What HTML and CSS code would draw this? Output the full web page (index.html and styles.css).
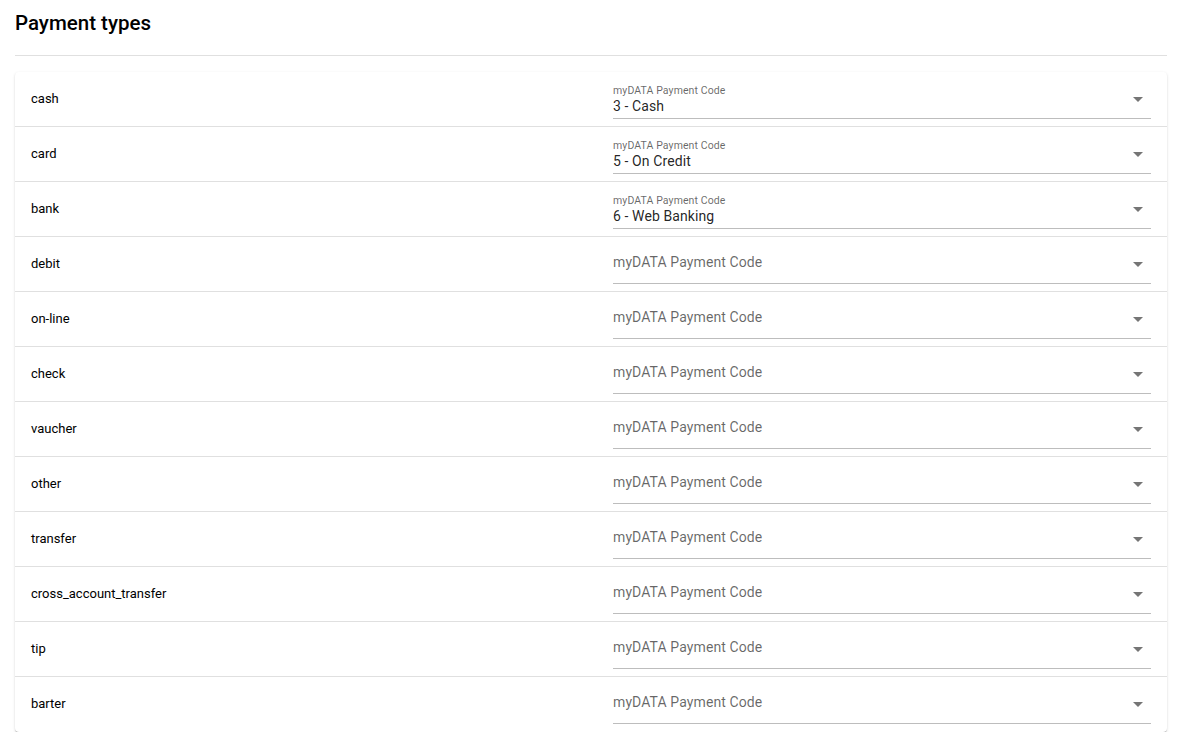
FILE: index.html
```html
<!DOCTYPE html>
<html lang="en">
<head>
    <meta charset="UTF-8">
    <meta name="viewport" content="width=device-width, initial-scale=1.0">
    <title>Payment types</title>
    <link rel="stylesheet" href="styles.css">
</head>
<body>
    <h1>Payment types</h1>
    <hr class="divider">

    <div class="card">
        <div class="row">
            <div class="name">cash</div>
            <div class="field filled">
                <div class="field-text">
                    <span class="field-label">myDATA Payment Code</span>
                    <span class="field-value">3 - Cash</span>
                </div>
                <span class="arrow"></span>
            </div>
        </div>
        <div class="row">
            <div class="name">card</div>
            <div class="field filled">
                <div class="field-text">
                    <span class="field-label">myDATA Payment Code</span>
                    <span class="field-value">5 - On Credit</span>
                </div>
                <span class="arrow"></span>
            </div>
        </div>
        <div class="row">
            <div class="name">bank</div>
            <div class="field filled">
                <div class="field-text">
                    <span class="field-label">myDATA Payment Code</span>
                    <span class="field-value">6 - Web Banking</span>
                </div>
                <span class="arrow"></span>
            </div>
        </div>
        <div class="row">
            <div class="name">debit</div>
            <div class="field">
                <div class="field-text"><span class="placeholder">myDATA Payment Code</span></div>
                <span class="arrow"></span>
            </div>
        </div>
        <div class="row">
            <div class="name">on-line</div>
            <div class="field">
                <div class="field-text"><span class="placeholder">myDATA Payment Code</span></div>
                <span class="arrow"></span>
            </div>
        </div>
        <div class="row">
            <div class="name">check</div>
            <div class="field">
                <div class="field-text"><span class="placeholder">myDATA Payment Code</span></div>
                <span class="arrow"></span>
            </div>
        </div>
        <div class="row">
            <div class="name">vaucher</div>
            <div class="field">
                <div class="field-text"><span class="placeholder">myDATA Payment Code</span></div>
                <span class="arrow"></span>
            </div>
        </div>
        <div class="row">
            <div class="name">other</div>
            <div class="field">
                <div class="field-text"><span class="placeholder">myDATA Payment Code</span></div>
                <span class="arrow"></span>
            </div>
        </div>
        <div class="row">
            <div class="name">transfer</div>
            <div class="field">
                <div class="field-text"><span class="placeholder">myDATA Payment Code</span></div>
                <span class="arrow"></span>
            </div>
        </div>
        <div class="row">
            <div class="name">cross_account_transfer</div>
            <div class="field">
                <div class="field-text"><span class="placeholder">myDATA Payment Code</span></div>
                <span class="arrow"></span>
            </div>
        </div>
        <div class="row">
            <div class="name">tip</div>
            <div class="field">
                <div class="field-text"><span class="placeholder">myDATA Payment Code</span></div>
                <span class="arrow"></span>
            </div>
        </div>
        <div class="row">
            <div class="name">barter</div>
            <div class="field">
                <div class="field-text"><span class="placeholder">myDATA Payment Code</span></div>
                <span class="arrow"></span>
            </div>
        </div>
    </div>
</body>
</html>
```

FILE: styles.css
```css
body {
    font-family: Roboto, "Liberation Sans", sans-serif;
    margin: 0;
    padding: 9px 16px 0 15px;
    background-color: #fff;
    color: rgba(0, 0, 0, 0.87);
}

h1 {
    font-size: 20.5px;
    font-weight: 500;
    line-height: 28px;
    margin: 0;
    color: #000;
}

.divider {
    border: none;
    border-top: 1px solid #e0e0e0;
    margin: 18px 0 16px 0;
}

.card {
    background: #fff;
    border-radius: 4px;
    box-shadow: 0 2px 1px -1px rgba(0, 0, 0, 0.2),
                0 1px 1px 0 rgba(0, 0, 0, 0.14),
                0 1px 3px 0 rgba(0, 0, 0, 0.12);
}

.row {
    display: grid;
    grid-template-columns: 582px 1fr;
    height: 55px;
    padding: 0 16px;
    border-bottom: 1px solid #e0e0e0;
    box-sizing: border-box;
}

.row:last-child {
    border-bottom: none;
}

.name {
    font-size: 13px;
    align-self: center;
    padding-bottom: 2px;
    color: #000;
}

.field {
    display: flex;
    align-items: flex-start;
    height: 35px;
    margin-top: 12px;
    border-bottom: 1px solid #bdbdbd;
    box-sizing: border-box;
    letter-spacing: 0.1px;
}

.field-text {
    flex: 1;
    display: flex;
    flex-direction: column;
}

.filled .field-text {
    padding-top: 1px;
}

.field-label {
    font-size: 10.5px;
    line-height: 12px;
    color: rgba(0, 0, 0, 0.6);
}

.field-value {
    font-size: 14px;
    line-height: 18px;
}

.placeholder {
    font-size: 14px;
    line-height: 18px;
    padding-top: 4px;
    color: rgba(0, 0, 0, 0.6);
}

.arrow {
    width: 0;
    height: 0;
    margin: 13px 8px 0 0;
    border-left: 5px solid transparent;
    border-right: 5px solid transparent;
    border-top: 5px solid #757575;
}
```
